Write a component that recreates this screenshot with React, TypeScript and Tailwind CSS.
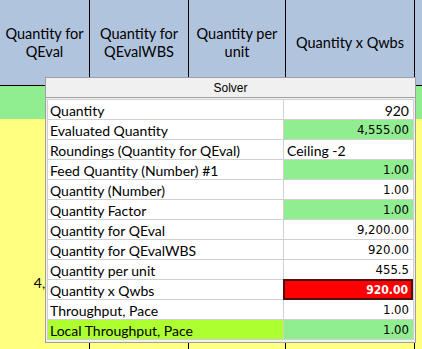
type Row = {
    label: string;
    value: string;
    num?: boolean;
    labelBg?: string;
    valueBg?: string;
    error?: boolean;
};

const rows: Row[] = [
    { label: "Quantity", value: "920" },
    { label: "Evaluated Quantity", value: "4,555.00", num: true, valueBg: "bg-[#90ee90]" },
    { label: "Roundings (Quantity for QEval)", value: "Ceiling -2" },
    { label: "Feed Quantity (Number) #1", value: "1.00", num: true, valueBg: "bg-[#90ee90]" },
    { label: "Quantity (Number)", value: "1.00", num: true },
    { label: "Quantity Factor", value: "1.00", num: true, valueBg: "bg-[#90ee90]" },
    { label: "Quantity for QEval", value: "9,200.00", num: true },
    { label: "Quantity for QEvalWBS", value: "920.00", num: true },
    { label: "Quantity per unit", value: "455.5", num: true },
    { label: "Quantity x Qwbs", value: "920.00", num: true, error: true },
    { label: "Throughput, Pace", value: "1.00", num: true },
    { label: "Local Throughput, Pace", value: "1.00", num: true, labelBg: "bg-[#adff2f]", valueBg: "bg-[#90ee90]" },
];

function HeaderCell({ children }: { children: React.ReactNode }) {
    return (
        <div className="h-[86px] bg-[#b0c4de] border-r border-b border-black flex items-center justify-center text-center text-[14.5px] leading-[18px] px-1">
            {children}
        </div>
    );
}

function SolverRow({ row }: { row: Row }) {
    return (
        <div className="flex h-[20px] border-b border-[#d0d0d0]">
            <div className={`w-[236px] shrink-0 border-r border-[#d0d0d0] pl-[2px] pt-px flex items-center text-[14px] whitespace-nowrap overflow-hidden ${row.labelBg ?? ""}`}>
                {row.label}
            </div>
            {row.error ? (
                <div className="flex-grow -mt-px -ml-px h-[21px] bg-[#ff0000] border-2 border-[#501010] flex items-center justify-end pr-[3px] text-white font-bold text-[12px] font-['DejaVu_Sans_Condensed','DejaVu_Sans',sans-serif]">
                    {row.value}
                </div>
            ) : row.num ? (
                <div className={`flex-grow flex items-center justify-end pr-[4px] whitespace-nowrap text-[13px] font-['DejaVu_Sans_Condensed','DejaVu_Sans',sans-serif] ${row.valueBg ?? ""}`}>
                    {row.value}
                </div>
            ) : (
                <div
                    className={`flex-grow flex items-center pt-px whitespace-nowrap text-[14px] ${
                        row.value === "Ceiling -2" ? "justify-start pl-[3px]" : "justify-end pr-[4px]"
                    } ${row.valueBg ?? ""}`}
                >
                    {row.value}
                </div>
            )}
        </div>
    );
}

function Solver() {
    return (
        <div className="absolute left-[45px] top-[77px] w-[371px] h-[266px] border border-[#a0a0a0] bg-[#f0f0f0] flex flex-col">
            <div className="h-[20px] border-b border-[#a0a0a0] flex items-center justify-center text-[12px] font-['Liberation_Sans',sans-serif]">
                Solver
            </div>
            <div className="px-px pt-px flex-grow">
                <div className="bg-white border-t border-x border-[#d0d0d0]">
                    {rows.map((r) => (
                        <SolverRow key={r.label} row={r} />
                    ))}
                </div>
            </div>
        </div>
    );
}

export default function App() {
    return (
        <div className="relative w-[422px] h-[349px] overflow-hidden bg-white text-black font-['Lato',sans-serif]">
            <div className="grid grid-cols-[90px_99px_97px_129px_1fr]">
                <HeaderCell>Quantity for<br />QEval</HeaderCell>
                <HeaderCell>Quantity for<br />QEvalWBS</HeaderCell>
                <HeaderCell>Quantity per<br />unit</HeaderCell>
                <HeaderCell>Quantity x Qwbs</HeaderCell>
                <div className="h-[86px] bg-[#b0c4de] border-b border-black" />

                <div className="h-[33px] bg-[#90ee90] border-r border-black" />
                <div className="h-[33px] bg-[#90ee90] border-r border-black" />
                <div className="h-[33px] bg-[#90ee90] border-r border-black" />
                <div className="h-[33px] bg-[#90ee90] border-r border-black" />
                <div className="h-[33px] bg-[#90ee90]" />

                <div className="h-[326px] bg-[#ffff80] border-r border-black flex items-center justify-end pr-0 text-[14px]">4,555.00</div>
                <div className="h-[326px] bg-[#ffff80] border-r border-black" />
                <div className="h-[326px] bg-[#ffff80] border-r border-black" />
                <div className="h-[326px] bg-[#ffff80] border-r border-black" />
                <div className="h-[326px] bg-[#ffff80]" />
            </div>
            <Solver />
        </div>
    );
}
